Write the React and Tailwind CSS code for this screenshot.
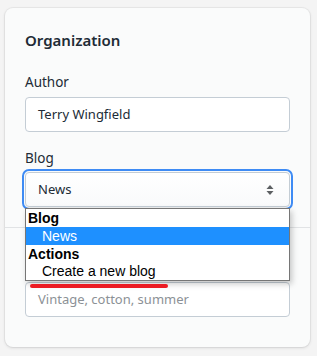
import React from "react";

function UpDown() {
  return (
    <svg width="8" height="12" viewBox="0 0 8 12" className="block">
      <path d="M4 1 L7.5 5 L0.5 5 Z" fill="#5c5f62" />
      <path d="M4 11 L7.5 7 L0.5 7 Z" fill="#5c5f62" />
    </svg>
  );
}

export default function App() {
  const sans = { fontFamily: '"Noto Sans", "Open Sans", sans-serif' };
  return (
    <div className="min-h-[356px] w-[317px] bg-[#f4f4f4] pt-2 pl-[5px]" style={sans}>
      <div className="relative w-[305px] rounded-lg bg-[#fafbfb] shadow-[0_0_0_1px_rgba(63,63,68,0.06),0_1px_3px_0_rgba(63,63,68,0.15)]">
        <div className="px-5 pt-5 pb-5 border-b border-[#e1e3e5]">
          <h2 className="text-[15px] leading-6 font-semibold text-[#212b36]">Organization</h2>
          <div className="mt-5">
            <div className="text-[13.5px] leading-5 text-[#212b36] mb-[5px]">Author</div>
            <div className="h-[35px] rounded-[4px] border border-[#c4cdd5] bg-white flex items-center px-3 text-[13px] text-[#212b36]">
              Terry Wingfield
            </div>
          </div>
          <div className="mt-4">
            <div className="text-[13.5px] leading-5 text-[#212b36] mb-1">Blog</div>
            <div className="relative">
              <div className="h-[35px] rounded-[4px] border border-[#c4cdd5] bg-gradient-to-b from-white to-[#f9fafb] shadow-[0_1px_0_0_rgba(22,29,37,0.05)] outline-2 outline-offset-[1px] outline-[#3e8bf4] flex items-center justify-between pl-3 pr-[15px] text-[13px] text-[#212b36]">
                <span>News</span>
                <UpDown />
              </div>
              <div
                className="absolute left-0 top-[36px] z-10 w-[265px] border border-[#767676] bg-white shadow-[2px_3px_6px_rgba(0,0,0,0.22)] text-[14px] text-black"
                style={{ fontFamily: '"Liberation Sans", Arial, sans-serif' }}
              >
                <div className="h-[18px] leading-[18px] pl-[2px] font-bold">Blog</div>
                <div className="h-[18px] leading-[18px] pl-4 bg-[#1e90ff] text-white">News</div>
                <div className="h-[18px] leading-[18px] pl-[2px] font-bold">Actions</div>
                <div className="h-[17px] leading-[17px] pl-4">Create a new blog</div>
              </div>
            </div>
          </div>
        </div>
        <div className="px-5 pt-5 pb-[30px]">
          <div className="h-6" />
          <div className="relative mt-[10px]">
            <div className="h-[35px] rounded-[4px] border border-[#c4cdd5] bg-white flex items-center px-3 text-[13px] text-[#8c9196]">
              Vintage, cotton, summer
            </div>
            <div className="absolute left-[5px] top-[2px] z-20 h-[4px] w-[138px] rounded-full bg-[#ec1c24]" />
          </div>
        </div>
      </div>
    </div>
  );
}
